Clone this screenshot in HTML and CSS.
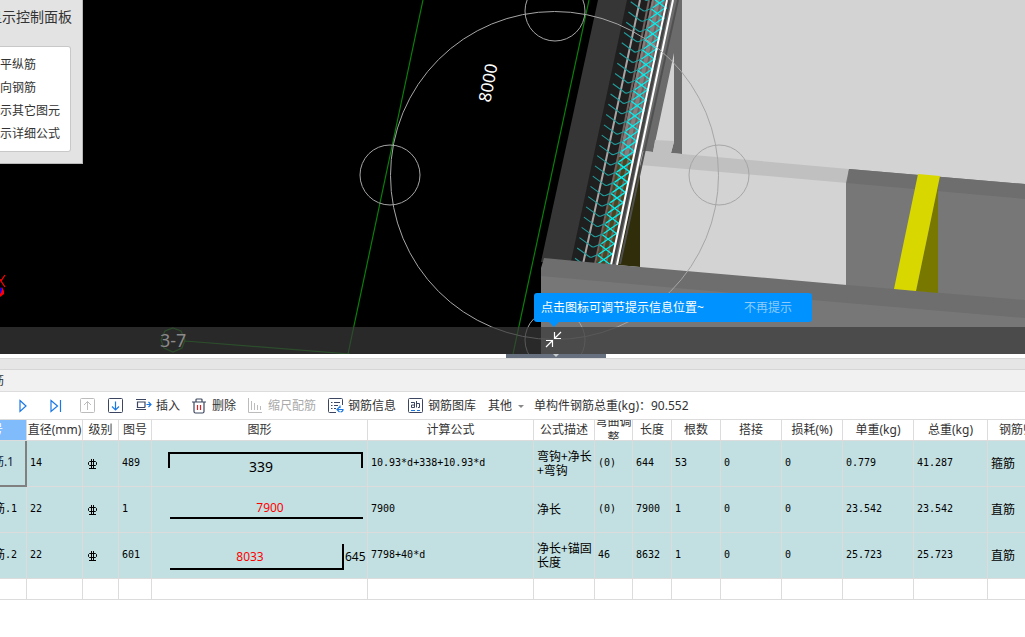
FILE: index.html
```html
<!DOCTYPE html>
<html lang="zh-CN">
<head>
<meta charset="utf-8">
<title>钢筋三维</title>
<link rel="stylesheet" href="styles.css">
</head>
<body>
<main class="app">
  <section class="viewport">
    <svg class="scene" viewBox="0 0 1025 354" preserveAspectRatio="xMinYMin slice" aria-hidden="true">
      <defs>
        <g id="stirrup" fill="none">
          <path d="M0 0 11 8Q13 10 15 9L22 6" stroke="#229c9c" stroke-width="1.1"/>
          <path d="M22 6 38-5M23-3 36 7" stroke="#00f0f0" stroke-width="1.3"/>
        </g>
        <g id="stirrups">
          <use href="#stirrup"/>
          <use href="#stirrup" x="-2.23" y="10.26"/>
          <use href="#stirrup" x="-4.46" y="20.52"/>
          <use href="#stirrup" x="-6.69" y="30.78"/>
          <use href="#stirrup" x="-8.92" y="41.04"/>
        </g>
      </defs>
      <rect width="1025" height="354" fill="#000"/>
      <path d="M650 0H1025V354H590V262Z" fill="#d3d3d3"/>
      <path d="M598 0H652L590 262H541Z" fill="#363636"/>
      <path d="M627 0H655L598 266H570Z" fill="#1f1f1f"/>
      <path d="M652 0H682V154L671 153 674 142V53L653 152 644 151 617 266H596Z" fill="#6b6b6b"/>
      <path d="M655 140 674 141 671 153 682 154 849 169 847 183 640 165 643 151 653 152Z" fill="#c0c0c0"/>
      <path d="M652 0H664L631 158H619Z" fill="#858080"/>
      <path d="M619 157 636 155 612 266H596Z" fill="#4a4720"/>
      <path d="M640 165V267L617 265Z" fill="#2f2d0a"/>
      <path d="M668 0 635 158 612 264" stroke="#444" stroke-width="5" fill="none"/>
      <path d="M678 0 643 158 620 264" stroke="#505050" stroke-width="2" fill="none"/>
      <path d="M640 0 606 160 583 264" stroke="#aaa5a5" stroke-width="2" fill="none"/>
      <path d="M649 0 618 157 595 264M655 0 623 157 600 264M661 0 629 157 606 264" stroke="#70635f" stroke-width="2" fill="none"/>
      <use href="#stirrup" x="633" y="-9"/>
      <use href="#stirrups" x="630.7" y="1.7"/>
      <use href="#stirrups" x="619.5" y="53"/>
      <use href="#stirrups" x="608.4" y="104.3"/>
      <use href="#stirrups" x="597.2" y="155.6"/>
      <use href="#stirrups" x="586.1" y="206.9"/>
      <use href="#stirrup" x="575" y="258.2"/>
      <path d="M667 0 633 160 611 265M673 0 639 160 617 265" stroke="#fff" stroke-width="2" fill="none"/>
      <path d="M849 169 1025 184V320L846 305V183Z" fill="#777"/>
      <path d="M849 169 1025 184V199L847 183Z" fill="#6e6e6e"/>
      <path d="M541 275 1025 317V354H541Z" fill="#777"/>
      <path d="M544 258 640 267 847 285 1025 300V318L812 300 541 276V268Z" fill="#6e6e6e"/>
      <path d="M940 176 938 188V293L916 291Z" fill="#787800"/>
      <path d="M918 174 940 176 916 291 894 289Z" fill="#d8d800"/>
      <g fill="none" stroke="#087f08" stroke-width="1.2">
        <path d="M423 0 348 354M589 0 513 354"/>
        <path d="M173 328 181 331 185 340 182 348 173 352 164 348 161 340 165 331ZM185 341 350 354"/>
      </g>
      <g fill="none" stroke="#a6a6a6">
        <circle cx="554.500" cy="175.500" r="164"/>
        <circle cx="390" cy="175" r="30"/>
        <circle cx="555" cy="11" r="30"/>
        <circle cx="719" cy="175" r="30"/>
        <circle cx="555" cy="340" r="30"/>
      </g>
      <text class="dimension" transform="translate(494 84) rotate(-79)" text-anchor="middle">8000</text>
      <path d="M0 291 2 287 4 291 4 294 0 297Z" fill="#f00"/>
      <path d="M0 287 2 289 1 293 0 294Z" fill="#00f"/>
      <path d="M5 275 1 281 5 287M0 280H2" stroke="#f00" stroke-width="1.3" fill="none"/>
    </svg>

    <aside class="display-panel">
      <h2 class="panel-title"><span>显示控制面板</span></h2>
      <ul class="panel-list">
        <li>平纵筋</li>
        <li>向钢筋</li>
        <li>示其它图元</li>
        <li>示详细公式</li>
      </ul>
    </aside>

    <div class="message-bar">
      <span class="axis-label">3-7</span>
      <button class="collapse" type="button" aria-label="调节提示信息位置">
        <svg width="17" height="17" viewBox="0 0 17 17" fill="none" stroke="#fff" stroke-width="1.2"><path d="M16 1 10 7M9.500 1V7.500H16M1 16 7 10M1 9.500H7.500V16"/></svg>
      </button>
    </div>
    <div class="tip">
      <span>点击图标可调节提示信息位置~</span>
      <a class="tip-link" href="#">不再提示</a>
    </div>
  </section>

  <div class="splitter"><span class="splitter-grip"></span></div>
  <div class="dock-gap"></div>
  <div class="dock-title"><span>钢筋</span></div>

  <div class="toolbar">
    <div class="nav">
      <button type="button" aria-label="下一条"><svg width="8" height="14" viewBox="0 0 8 14" fill="none" stroke="#1a78e6" stroke-width="1.2"><path d="M1 1.500 7 7 1 12.500Z"/></svg></button>
      <button type="button" aria-label="最后一条"><svg width="12" height="14" viewBox="0 0 12 14" fill="none" stroke="#1a78e6" stroke-width="1.2"><path d="M1 1.500 7.500 7 1 12.500ZM10.500 1V13"/></svg></button>
      <button type="button" aria-label="上移"><svg width="16" height="16" viewBox="0 0 16 16" fill="none" stroke="#bcbcbc"><rect x=".5" y=".5" width="14" height="14" rx="1"/><path d="M7.500 12V3.500M4 7 7.500 3.500 11 7"/></svg></button>
      <button type="button" aria-label="下移"><svg width="16" height="16" viewBox="0 0 16 16" fill="none" stroke="#3c4660"><rect x=".5" y=".5" width="14" height="14" rx="1"/><path stroke="#1a78e6" stroke-width="1.200" d="M7.500 3.500V12M4 8.500 7.500 12 11 8.500"/></svg></button>
    </div>
    <button type="button" class="insert"><svg width="16" height="16" viewBox="0 0 16 16" fill="none" stroke="#3c4660" stroke-width="1.2"><path d="M0 1.500H10M0 11.500H10M9 9.500H1.500V4H9V9.500"/><path stroke="#1a78e6" d="M10.500 6.500H15M12.500 4 15 6.500 12.500 9"/></svg>插入</button>
    <button type="button" class="delete"><svg width="16" height="16" viewBox="0 0 16 16" fill="none" stroke="#3c4660" stroke-width="1.2"><path d="M0 4H14M4 4V1.500Q4 1 5 1H9Q10 1 10 1.500V4M2 4V13.500Q2 15 3.500 15H10.500Q12 15 12 13.500V4"/><path stroke="#e02020" d="M5.500 7V12M8.500 7V12"/></svg>删除</button>
    <button type="button" class="scale" disabled><svg width="16" height="16" viewBox="0 0 16 16" fill="none" stroke="#bcbcbc"><path d="M.5 0V14.500H14M3.500 3V12M6.500 5V12M9.500 7V12M12.500 8V12"/></svg>缩尺配筋</button>
    <button type="button" class="info"><svg width="16" height="16" viewBox="0 0 16 16" fill="none" stroke="#3c4660"><path d="M8 14.500H1.500Q.5 14.500.5 13.500V1.500Q.5.500 1.500.500H13.500Q14.500.500 14.500 1.500V7M3 4.500H4.500M6 4.500H12M3 7.500H4.500M6 7.500H10M3 10.500H4.500M6 10.500H8"/><path stroke="#1a78e6" stroke-width="1.200" d="M12 7.500V10M11.500 9 9 11.500 11.500 14M9 11.500H15Q15 13.500 12.500 14"/></svg>钢筋信息</button>
    <button type="button" class="library"><svg width="16" height="16" viewBox="0 0 16 16" fill="none" stroke="#3c4660"><rect x=".5" y=".5" width="14" height="14" rx="1"/><path d="M3 4.500H6.500V9.500H3.500V7H6.500M8.500 3V9.500M8.500 5.500H11.500V9.500H10"/><path stroke="#1a78e6" d="M3 12.500H7M9 12.500H12"/></svg>钢筋图库</button>
    <button type="button" class="other">其他<span class="caret"></span></button>
    <span class="total">单构件钢筋总重(kg)：90.552</span>
  </div>

  <table class="rebar">
    <colgroup>
      <col class="c-name"><col class="c-dia"><col class="c-grade"><col class="c-fig"><col class="c-shape"><col class="c-formula"><col class="c-desc"><col class="c-bend"><col class="c-len"><col class="c-count"><col class="c-lap"><col class="c-lap"><col class="c-unit"><col class="c-sum"><col>
    </colgroup>
    <thead>
      <tr>
        <th class="current"><div class="head name">筋号</div></th>
        <th><div class="head">直径(mm)</div></th>
        <th><div class="head">级别</div></th>
        <th><div class="head">图号</div></th>
        <th><div class="head">图形</div></th>
        <th><div class="head">计算公式</div></th>
        <th><div class="head">公式描述</div></th>
        <th><div class="head wrap">弯曲调整</div></th>
        <th><div class="head">长度</div></th>
        <th><div class="head">根数</div></th>
        <th><div class="head">搭接</div></th>
        <th><div class="head">损耗(%)</div></th>
        <th><div class="head">单重(kg)</div></th>
        <th><div class="head">总重(kg)</div></th>
        <th><div class="head last">钢筋归类</div></th>
      </tr>
    </thead>
    <tbody>
      <tr>
        <td class="selected"><div class="name active">箍筋.1</div></td>
        <td>14</td>
        <td class="grade"><svg width="10" height="10" viewBox="0 0 10 10" fill="none" stroke="#000"><path d="M3.500 0V9M5.500 0V9M1.500 2.500H7.500L8.500 3.500V5.500L7.500 6.500H1.500L.5 5.500V3.500ZM1 9.500H8"/></svg></td>
        <td>489</td>
        <td class="shape"><svg width="215" height="45" viewBox="0 0 215 45"><path d="M17 27V12H210V27" fill="none" stroke="#000" stroke-width="2"/><text class="big" x="109" y="31" text-anchor="middle">339</text></svg></td>
        <td>10.93*d+338+10.93*d</td>
        <td class="zh">弯钩+净长<br>+弯钩</td>
        <td>(0)</td><td>644</td><td>53</td><td>0</td><td>0</td><td>0.779</td><td>41.287</td>
        <td class="zh">箍筋</td>
      </tr>
      <tr>
        <td><div class="name"><span>筋</span>.1</div></td>
        <td>22</td>
        <td class="grade"><svg width="10" height="10" viewBox="0 0 10 10" fill="none" stroke="#000"><path d="M3.500 0V9M5.500 0V9M1.500 2.500H7.500L8.500 3.500V5.500L7.500 6.500H1.500L.5 5.500V3.500ZM1 9.500H8"/></svg></td>
        <td>1</td>
        <td class="shape"><svg width="215" height="45" viewBox="0 0 215 45"><path d="M18 31H211" stroke="#000" stroke-width="2"/><text class="red" x="118" y="25" text-anchor="middle">7900</text></svg></td>
        <td>7900</td>
        <td class="zh">净长</td>
        <td>(0)</td><td>7900</td><td>1</td><td>0</td><td>0</td><td>23.542</td><td>23.542</td>
        <td class="zh">直筋</td>
      </tr>
      <tr>
        <td><div class="name"><span>筋</span>.2</div></td>
        <td>22</td>
        <td class="grade"><svg width="10" height="10" viewBox="0 0 10 10" fill="none" stroke="#000"><path d="M3.500 0V9M5.500 0V9M1.500 2.500H7.500L8.500 3.500V5.500L7.500 6.500H1.500L.5 5.500V3.500ZM1 9.500H8"/></svg></td>
        <td>601</td>
        <td class="shape"><svg width="215" height="45" viewBox="0 0 215 45"><path d="M18 36H191V11" fill="none" stroke="#000" stroke-width="2"/><text class="red" x="98" y="28" text-anchor="middle">8033</text><text x="193" y="28">645</text></svg></td>
        <td>7798+40*d</td>
        <td class="zh">净长+锚固<br>长度</td>
        <td>46</td><td>8632</td><td>1</td><td>0</td><td>0</td><td>25.723</td><td>25.723</td>
        <td class="zh">直筋</td>
      </tr>
      <tr class="blank">
        <td></td><td></td><td></td><td></td><td></td><td></td><td></td><td></td><td></td><td></td><td></td><td></td><td></td><td></td><td></td>
      </tr>
    </tbody>
  </table>
</main>
</body>
</html>
```
FILE: styles.css
```css
* { box-sizing: border-box; }

body {
  margin: 0;
  background: #fff;
  color: #333;
  font: 12px/16px "Noto Sans", "Noto Sans CJK SC", sans-serif;
}

.app {
  display: flex;
  flex-direction: column;
  min-height: 100vh;
  overflow: hidden;
}

button {
  display: flex;
  align-items: center;
  gap: 4px;
  padding: 0;
  border: 0;
  background: none;
  color: inherit;
  font: inherit;
  white-space: nowrap;
}

svg { display: block; flex: none; }

/* 3D view */
.viewport {
  position: relative;
  height: 354px;
  overflow: hidden;
  background: #000;
}

.scene { width: 100%; height: 100%; }

.dimension {
  fill: #fff;
  font: 17px "Noto Sans", sans-serif;
}

.display-panel {
  position: absolute;
  top: 0;
  left: 0;
  width: 83px;
  padding: 7px 11px 11px 0;
  border: solid #b8b8b8;
  border-width: 0 1px 1px 0;
  background: #e3e3e3;
}

.panel-title {
  display: flex;
  justify-content: flex-end;
  margin: 0 -1px 19px 0;
  overflow: hidden;
  font-size: 14px;
  font-weight: 400;
  line-height: 20px;
  white-space: nowrap;
}

.panel-list {
  margin: 0;
  padding: 6px 0;
  border: 1px solid #c8c8c8;
  border-left: 0;
  border-radius: 0 3px 3px 0;
  background: #fff;
  list-style: none;
  line-height: 23px;
  white-space: nowrap;
}

.message-bar {
  position: absolute;
  right: 0;
  bottom: 0;
  left: 0;
  height: 27px;
  background: rgba(57, 57, 57, 0.714);
}

.axis-label {
  position: absolute;
  top: 1px;
  left: 160px;
  color: #8a8a8a;
  font-size: 18px;
  line-height: 24px;
}

.collapse {
  position: absolute;
  top: 4px;
  left: 545px;
}

.tip {
  position: absolute;
  top: 293px;
  left: 534px;
  display: flex;
  justify-content: space-between;
  align-items: center;
  width: 278px;
  height: 29px;
  padding: 0 20px 0 7px;
  border-radius: 3px;
  background: #0092ff;
  color: #fff;
  white-space: nowrap;
}

.tip::after {
  content: "";
  position: absolute;
  top: 29px;
  left: 15px;
  border: 5px solid transparent;
  border-top-color: #0092ff;
  border-bottom: 0;
}

.tip-link {
  color: #8cccff;
  text-decoration: none;
}

/* Dock */
.splitter {
  height: 4px;
  padding-left: 506px;
}

.splitter-grip {
  display: flex;
  justify-content: center;
  width: 100px;
  height: 4px;
  background: #66707e;
}

.splitter-grip::after {
  content: "";
  height: 3px;
  border: 3px solid transparent;
  border-top-color: #c8ccd0;
  border-bottom: 0;
}

.dock-gap {
  height: 12px;
  border: solid #d6d6d6;
  border-width: 1px 0;
  background: #e6e6e6;
}

.dock-title {
  display: flex;
  justify-content: flex-end;
  align-items: center;
  height: 22px;
  padding-right: calc(100% - 4px);
  border-bottom: 1px solid #dcdcdc;
  background: #f1f1f1;
  white-space: nowrap;
}

.toolbar {
  display: flex;
  align-items: center;
  height: 27px;
  padding: 1px 0 0 19px;
  white-space: nowrap;
}

.nav {
  display: grid;
  grid-template-columns: 31px 30px 28px 28px;
  align-items: center;
}

.insert { width: 56px; }
.delete { width: 56px; }
.scale { width: 80px; color: #aaa; }
.info { width: 80px; }
.library { width: 80px; }
.other { width: 46px; gap: 6px; }

.caret {
  border: 3px solid transparent;
  border-top-color: #888;
  border-bottom: 0;
}

/* Rebar table */
.rebar {
  width: 100%;
  table-layout: fixed;
  border-collapse: separate;
  border-spacing: 0;
  border-top: 1px solid #dcdcdc;
}

.c-name { width: 27px; }
.c-dia { width: 56px; }
.c-grade { width: 36px; }
.c-fig { width: 33px; }
.c-shape { width: 216px; }
.c-formula { width: 166px; }
.c-desc { width: 61px; }
.c-bend { width: 38px; }
.c-len { width: 39px; }
.c-count { width: 49px; }
.c-lap { width: 61px; }
.c-unit { width: 71px; }
.c-sum { width: 74px; }

.rebar th,
.rebar td {
  padding: 0;
  border: solid #dcdcdc;
  border-width: 0 1px 1px 0;
  overflow: hidden;
}

.rebar th:last-child,
.rebar td:last-child { border-right: 0; }

.head {
  display: flex;
  justify-content: center;
  align-items: center;
  height: 20px;
  overflow: hidden;
  font-weight: 400;
  text-align: center;
  white-space: nowrap;
}

.head.wrap { white-space: normal; }

.head.last {
  justify-content: flex-start;
  padding-left: 11px;
}

.current {
  background: #80bbfc;
  color: #fff;
}

.rebar td {
  height: 46px;
  padding: 0 0 2px 3px;
  background: #c2dfe1;
  color: #000;
  font-family: "DejaVu Sans Mono", "Noto Sans CJK SC", monospace;
  font-size: 10px;
  line-height: 14px;
  white-space: nowrap;
}

.rebar td.selected {
  border-right: 2px solid #808080;
  border-bottom: 2px solid #808080;
}

.rebar td.zh {
  font-family: "Noto Sans CJK SC", sans-serif;
  font-size: 12px;
}

.rebar td.grade { padding: 0 0 0 5px; }
.rebar td.shape { padding: 0; }

.name {
  display: flex;
  justify-content: flex-end;
  align-items: center;
  overflow: hidden;
}

.head.name {
  justify-content: flex-end;
  padding-right: 23px;
}

td .name {
  margin-left: -3px;
  padding-right: 9px;
}

td .name span { font-size: 12px; }

td .name.active {
  padding-right: 11px;
  color: #14233c;
  font: 12px/16px "Noto Sans", "Noto Sans CJK SC", sans-serif;
}

.shape text {
  fill: #000;
  font: 12px "Noto Sans", sans-serif;
}

.shape .big { font-size: 14px; }
.shape .red { fill: #f00; }

.rebar .blank td {
  height: 21px;
  background: #fff;
}
```
